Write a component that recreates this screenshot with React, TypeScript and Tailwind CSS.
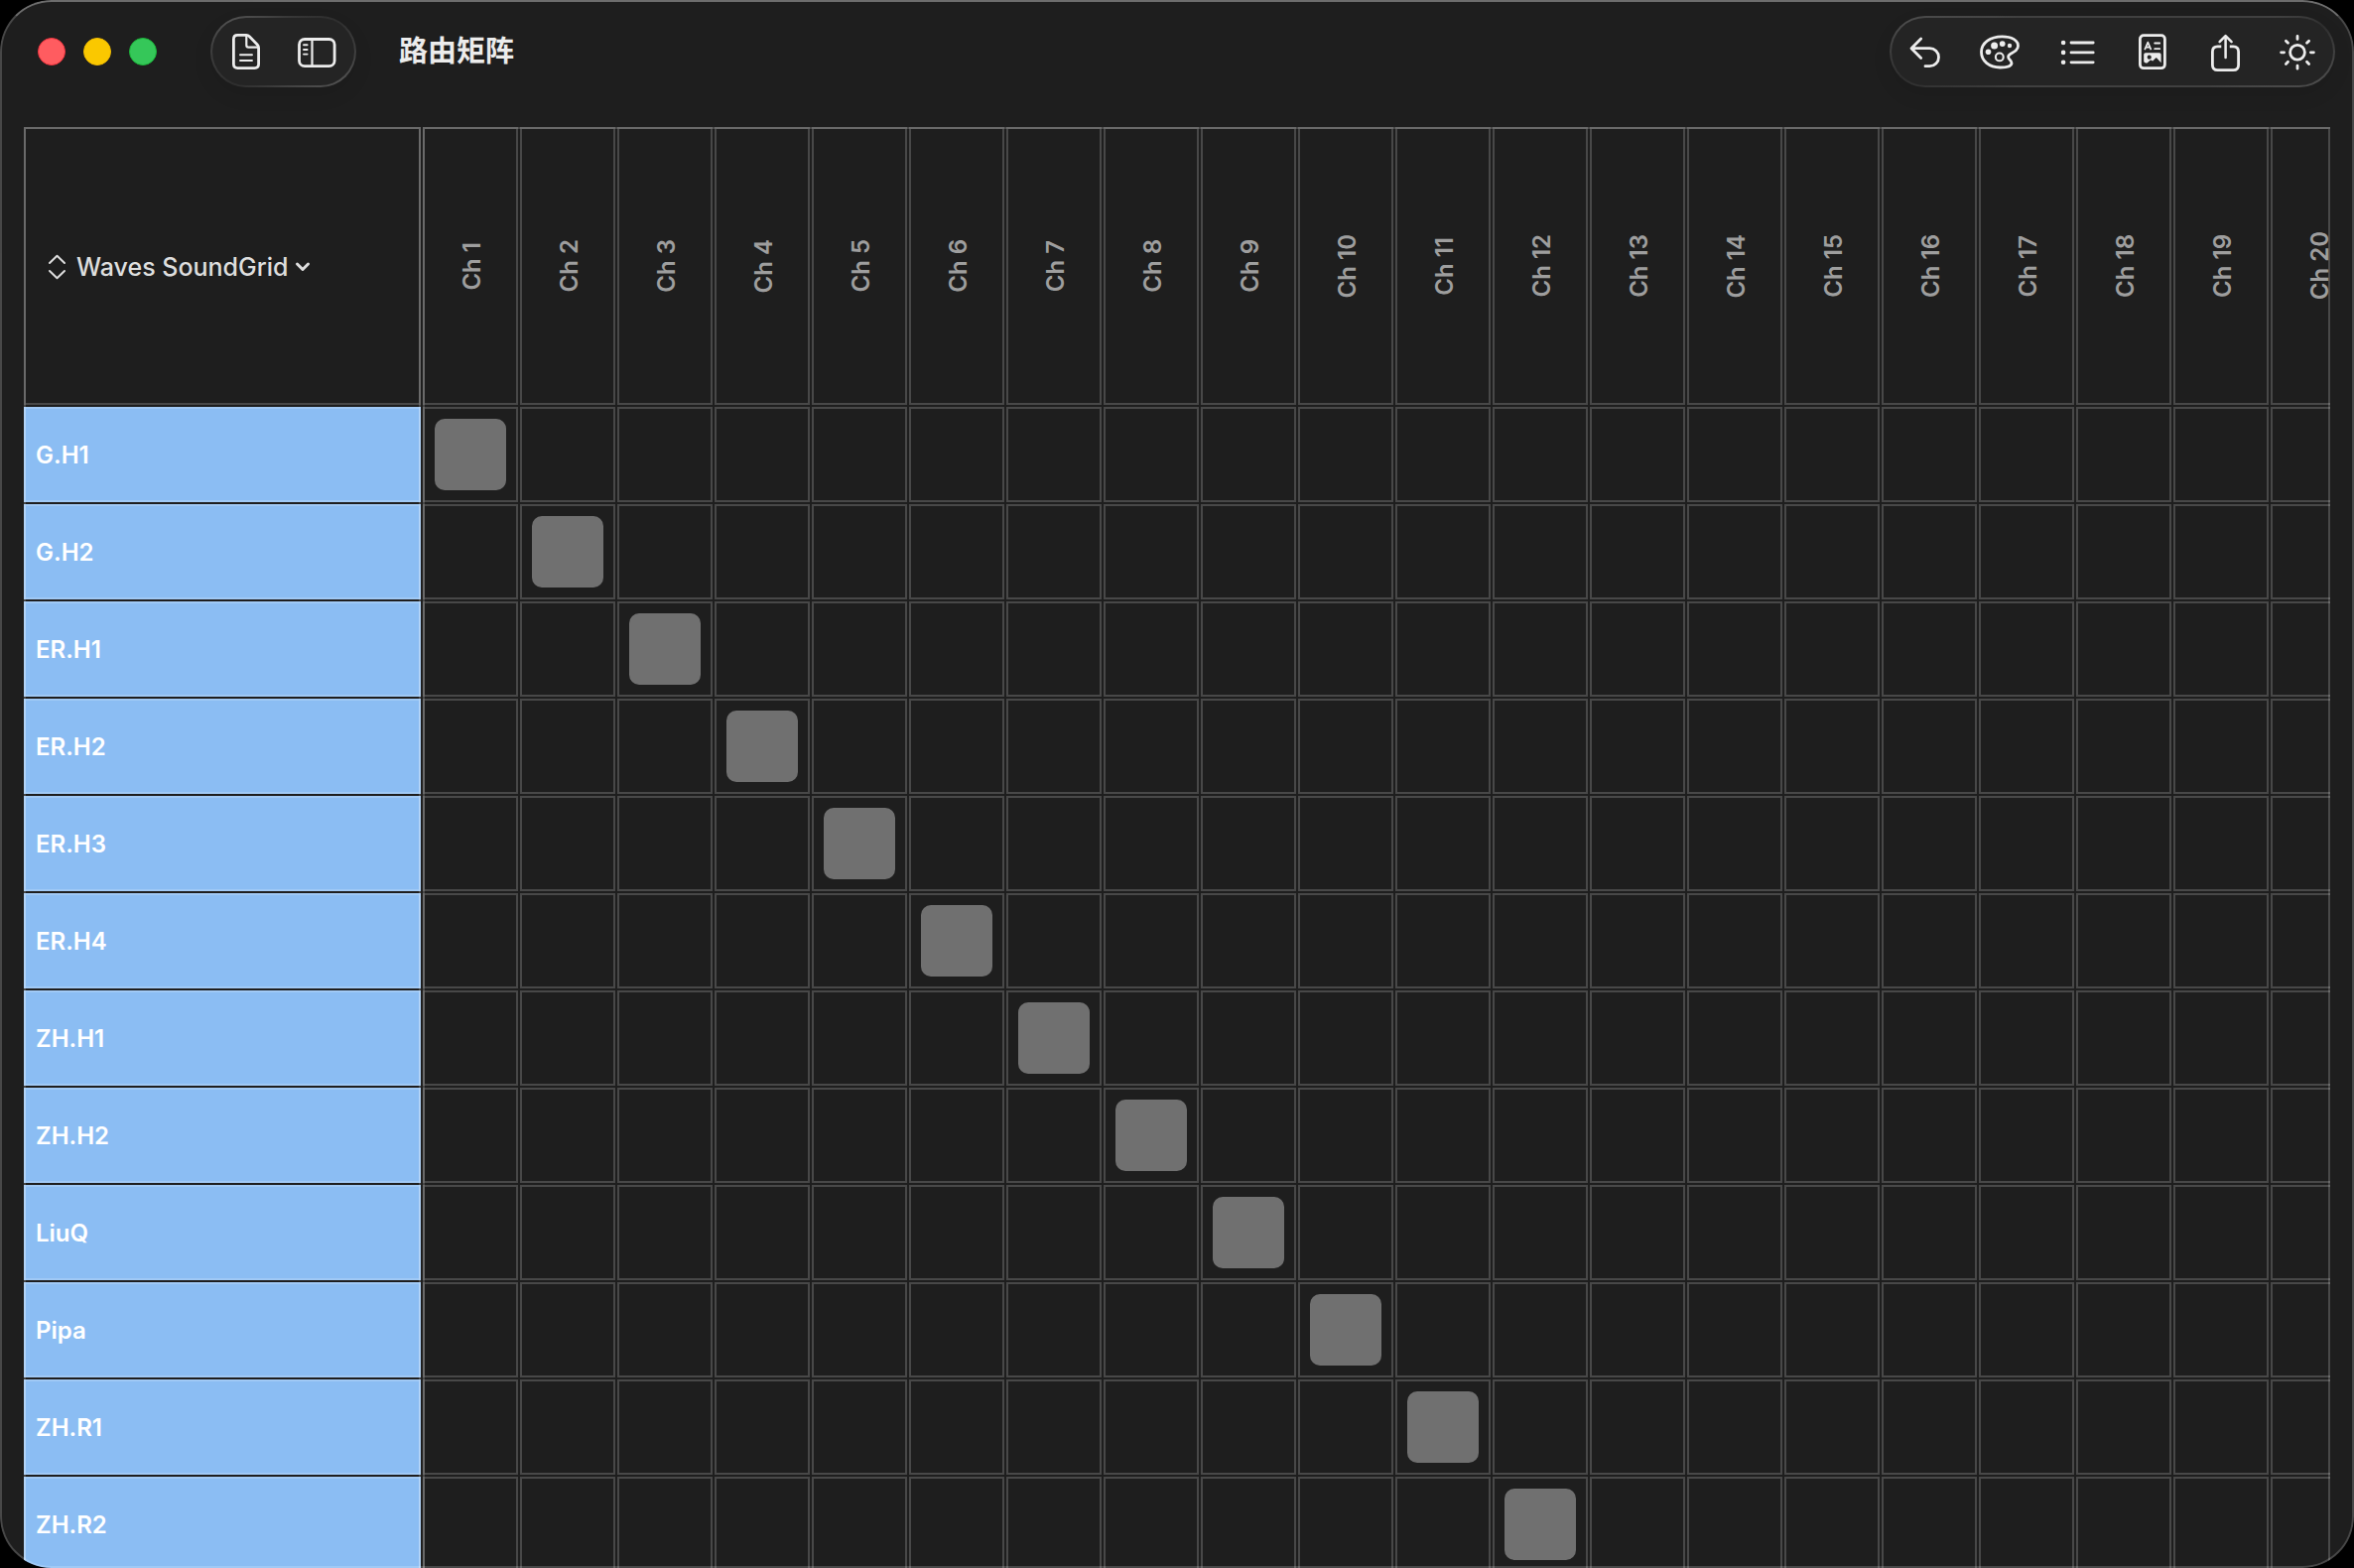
import { useState, type ReactNode } from "react";

const sources = [
  "G.H1", "G.H2", "ER.H1", "ER.H2", "ER.H3", "ER.H4",
  "ZH.H1", "ZH.H2", "LiuQ", "Pipa", "ZH.R1", "ZH.R2",
];
const channels = Array.from({ length: 20 }, (_, i) => `Ch ${i + 1}`);

function Icon({ children, className }: { children: ReactNode; className: string }) {
  return (
    <svg
      aria-hidden="true"
      className={`h-10 shrink-0 overflow-visible ${className}`}
      fill="none"
      stroke="currentColor"
      strokeWidth={2.8}
      strokeLinecap="round"
      strokeLinejoin="round"
    >
      {children}
    </svg>
  );
}

function DocumentIcon() {
  return (
    <Icon className="w-9">
      <path d="M9.4 3.4H18.2Q20 3.4 21.3 4.7L29.3 13Q30.6 14.3 30.6 16.2V32.6Q30.6 36.6 26.6 36.6H9.4Q5.4 36.6 5.4 32.6V7.4Q5.4 3.4 9.4 3.4Z" />
      <path strokeWidth={2.2} d="M18.3 4V13.6Q18.3 15.7 20.4 15.7H30" />
      <path strokeWidth={1.9} d="M12 23.3H24M12 29H24" />
    </Icon>
  );
}

function SidebarIcon() {
  return (
    <Icon className="w-10">
      <rect x="1.5" y="7.5" width="35.6" height="27.2" rx="5.5" />
      <path strokeWidth={2.2} d="M14.5 8V34" />
      <path strokeWidth={1.9} d="M6 13.3H9.6M6 18H9.6M6 22.6H9.6" />
    </Icon>
  );
}

function UndoIcon() {
  return (
    <Icon className="w-8">
      <path d="M11.7 7L2 16.7L11.7 26.4M2.4 16.7H20.5A9 9 0 0 1 20.5 34.7H16" />
    </Icon>
  );
}

function PaletteIcon() {
  return (
    <Icon className="w-10">
      <path d="M.5 20.6C.5 11 9.5 4.8 21.5 4.8C31 4.8 37.5 8.6 37.5 14.2C37.5 21.6 27.6 20.6 27.6 25.2C27.6 28 31 28.4 31 31.5C31 34.6 26 36 19.5 36C8.5 36 .5 29.6 .5 20.6Z" />
      <g fill="currentColor" stroke="none">
        <circle cx="7.5" cy="20.2" r="2.8" />
        <circle cx="13.6" cy="14" r="3.5" />
        <circle cx="21.7" cy="12.1" r="2.9" />
        <circle cx="29" cy="14" r="2.2" />
      </g>
      <circle cx="18.8" cy="25.4" r="3.9" strokeWidth={2.1} />
    </Icon>
  );
}

function ListIcon() {
  return (
    <Icon className="w-9">
      <path d="M11 11H33.2M11 20.9H33.2M11 30.8H33.2" />
      <g fill="currentColor" stroke="none">
        <circle cx="3.1" cy="11" r="2.3" />
        <circle cx="3.1" cy="20.9" r="2.3" />
        <circle cx="3.1" cy="30.8" r="2.3" />
      </g>
    </Icon>
  );
}

function RichDocumentIcon() {
  return (
    <Icon className="w-[34px]">
      <rect x="4.4" y="3.7" width="25" height="33" rx="3.6" />
      <path strokeWidth={1.7} strokeLinecap="butt" d="M9.1 18.2L12.3 10.6L15.5 18.2M10.3 15.7H14.3" />
      <path strokeWidth={1.8} d="M19.2 11.5H24.2M19.2 17.2H24.2" />
      <path
        fill="currentColor"
        stroke="none"
        fillRule="evenodd"
        d="M10 21.3H23.8Q25.6 21.3 25.6 23.1V31.2L21.3 26.6Q20.7 26 20.1 26.6L17.2 29.6L15.8 28.8Q15 28.3 14.3 29L11.6 31.4H10Q8.2 31.4 8.2 29.6V23.1Q8.2 21.3 10 21.3ZM13.7 23.6A2.1 2.1 0 1 0 13.7 27.8A2.1 2.1 0 1 0 13.7 23.6Z"
      />
    </Icon>
  );
}

function ShareIcon() {
  return (
    <Icon className="w-8">
      <path strokeLinecap="butt" d="M12.3 14.8H8.6Q3.4 14.8 3.4 20V33.4Q3.4 38.6 8.6 38.6H24.4Q29.6 38.6 29.6 33.4V20Q29.6 14.8 24.4 14.8H20.8" />
      <path strokeWidth={2.5} d="M16.6 4.4V26M10.6 10.2L16.6 4.2L22.6 10.2" />
    </Icon>
  );
}

function SunIcon() {
  return (
    <Icon className="w-9">
      <circle cx="17" cy="20.8" r="7.4" />
      <path d="M17 4.4V7.4M17 34.2V37.2M.6 20.8H3.6M30.4 20.8H33.4M5.4 9.2L7.5 11.3M26.5 30.3L28.6 32.4M5.4 32.4L7.5 30.3M26.5 11.3L28.6 9.2" />
    </Icon>
  );
}

const tools = [
  { label: "撤销", icon: <UndoIcon /> },
  { label: "颜色", icon: <PaletteIcon /> },
  { label: "列表", icon: <ListIcon /> },
  { label: "文稿", icon: <RichDocumentIcon /> },
  { label: "共享", icon: <ShareIcon /> },
  { label: "外观", icon: <SunIcon /> },
];

function TitleBar() {
  return (
    <header className="flex h-32 shrink-0 items-start pt-4 pr-[19px] pl-[38px]">
      <div className="flex h-[72px] items-center gap-[18px]">
        <button type="button" aria-label="关闭" className="size-7 rounded-full border border-[#f0343f] bg-[#ff5c60]" />
        <button type="button" aria-label="最小化" className="size-7 rounded-full border border-[#f0bb00] bg-[#fac800]" />
        <button type="button" aria-label="缩放" className="size-7 rounded-full border border-[#1cb43a] bg-[#35c759]" />
      </div>
      <div className="ml-[54px] flex h-[72px] items-center gap-1 rounded-full border-2 border-transparent pr-[3px] shadow-[0_8px_20px_rgba(0,0,0,0.08)] [background:linear-gradient(#242424,#242424)_padding-box,conic-gradient(#3a3a3a_0deg,#2e2e2e_60deg,#3e3e3e_90deg,#505050_115deg,#404040_180deg,#2e2e2e_240deg,#3e3e3e_270deg,#505050_300deg,#3a3a3a_360deg)_border-box]">
        <button type="button" aria-label="文件" className="flex w-[68px] items-center justify-center">
          <DocumentIcon />
        </button>
        <button type="button" aria-label="边栏" className="flex w-[68px] items-center justify-center">
          <SidebarIcon />
        </button>
      </div>
      <h1 className="ml-[43px] flex h-[72px] items-center text-[29px] leading-9 font-bold">路由矩阵</h1>
      <div className="ml-auto flex h-[72px] items-center gap-10 rounded-full border-2 border-transparent pr-[17px] pl-[18px] shadow-[0_8px_20px_rgba(0,0,0,0.08)] [background:linear-gradient(#242424,#242424)_padding-box,conic-gradient(#404040_0deg,#404040_78deg,#2e2e2e_83deg,#404040_90deg,#4c4c4c_98deg,#404040_110deg,#404040_250deg,#2e2e2e_263deg,#3e3e3e_270deg,#4c4c4c_278deg,#404040_290deg,#404040_360deg)_border-box]">
        {tools.map((tool) => (
          <button key={tool.label} type="button" aria-label={tool.label}>
            {tool.icon}
          </button>
        ))}
      </div>
    </header>
  );
}

function DevicePicker() {
  return (
    <div className="flex h-[276px] w-[396px] items-center pt-0.5 pl-[22px] text-[#dedede]">
      <svg aria-hidden="true" className="h-[26px] w-[18px]" fill="none" stroke="currentColor" strokeWidth="2" strokeLinecap="round" strokeLinejoin="round">
        <path d="M2 9L9.5 1.8L17 9M2 17L9.5 24.2L17 17" />
      </svg>
      <select
        aria-label="设备"
        className="ml-[11px] appearance-none bg-transparent text-[25px] leading-8 font-medium outline-none [field-sizing:content]"
      >
        <option>Waves SoundGrid</option>
      </select>
      <svg aria-hidden="true" className="ml-[7px] h-4 w-4" fill="none" stroke="currentColor" strokeWidth="3" strokeLinecap="round" strokeLinejoin="round">
        <path d="M2.5 5L8 10.5L13.5 5" />
      </svg>
    </div>
  );
}

function Matrix() {
  const [routes, setRoutes] = useState(() => sources.map((_, i) => i));

  return (
    <main className="relative mr-6 ml-6 min-h-0 flex-1 overflow-hidden">
      <table className="-mt-0.5 -ml-0.5 border-separate border-spacing-0.5">
        <thead>
          <tr>
            <th className="border-2 border-white/[0.187] p-0">
              <DevicePicker />
            </th>
            {channels.map((name) => (
              <th key={name} scope="col" className="border-2 border-white/[0.187] p-0">
                <div className="flex h-[276px] w-[92px] items-center justify-center pl-[3px]">
                  <span className="rotate-180 text-2xl leading-8 font-semibold whitespace-nowrap text-[#9e9e9e] [writing-mode:vertical-rl]">
                    {name}
                  </span>
                </div>
              </th>
            ))}
          </tr>
        </thead>
        <tbody>
          {sources.map((source, row) => (
            <tr key={source}>
              <th scope="row" className="border-2 border-white/[0.187] bg-[#8bbdf3] p-0 text-left text-2xl font-semibold text-white">
                <div className="pt-0.5 pl-[10px]">{source}</div>
              </th>
              {channels.map((name, col) => (
                <td key={name} className="border-2 border-white/[0.187] p-0">
                  <div className="flex h-[92px] w-[92px] items-center justify-center">
                    <input
                      type="checkbox"
                      aria-label={`${source} → ${name}`}
                      checked={routes[row] === col}
                      onChange={(e) =>
                        setRoutes((prev) => prev.map((c, i) => (i === row ? (e.target.checked ? col : -1) : c)))
                      }
                      className="size-[72px] appearance-none rounded-[10px] checked:bg-[#707070]"
                    />
                  </div>
                </td>
              ))}
            </tr>
          ))}
        </tbody>
      </table>
      <div className="pointer-events-none absolute inset-y-0 left-0 w-[400px] border-2 border-b-0 border-white/[0.187]" />
      <div className="pointer-events-none absolute inset-y-0 right-0 left-[402px] border-2 border-b-0 border-white/[0.187]" />
    </main>
  );
}

export default function App() {
  return (
    <div className="h-screen bg-black">
      <div className="relative flex h-full flex-col overflow-hidden rounded-[52px] bg-[#1e1e1e] font-[Inter,'Noto_Sans_CJK_SC',sans-serif] text-[#ececec]">
        <TitleBar />
        <Matrix />
        <div className="pointer-events-none absolute inset-0 rounded-[52px] border-2 border-white/[0.187] border-t-white/35" />
      </div>
    </div>
  );
}
